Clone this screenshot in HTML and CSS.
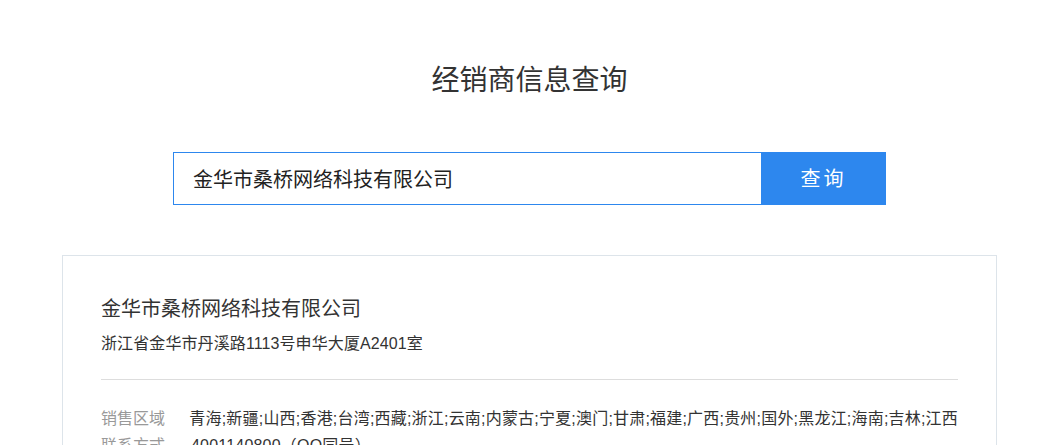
FILE: index.html
```html
<!DOCTYPE html>
<html lang="zh-CN">
<head>
    <meta charset="UTF-8">
    <meta name="viewport" content="width=device-width, initial-scale=1.0">
    <title>经销商信息查询</title>
    <link rel="stylesheet" href="styles.css">
</head>
<body>
    <div class="wrap">
        <!--标题-->
        <h1 class="title">经销商信息查询</h1>
        <!--搜索框-->
        <div class="search">
            <input class="search-input" type="text" value="金华市桑桥网络科技有限公司">
            <button class="search-btn">查询</button>
        </div>
        <!--查询结果-->
        <div class="result">
            <div class="result-head">
                <h2 class="company">金华市桑桥网络科技有限公司</h2>
                <p class="address">浙江省金华市丹溪路1113号申华大厦A2401室</p>
            </div>
            <ul class="info">
                <li><span class="label">销售区域</span><span class="value">青海;新疆;山西;香港;台湾;西藏;浙江;云南;内蒙古;宁夏;澳门;甘肃;福建;广西;贵州;国外;黑龙江;海南;吉林;江西</span></li>
                <li><span class="label">联系方式</span><span class="value">4001140800（QQ同号）</span></li>
            </ul>
        </div>
    </div>
</body>
</html>
```

FILE: styles.css
```css
*{
    margin:0;
    padding:0;
    box-sizing:border-box;
}
body{
    font-family:"Liberation Sans","Noto Sans CJK SC",sans-serif;
    color:#333;
    background:#fff;
}
.wrap{
    width:935px;
    margin-left:62px;
}
/*标题*/
.title{
    font-size:28px;
    font-weight:normal;
    text-align:center;
    line-height:40px;
    padding-top:61px;
    color:#333;
}
/*搜索框*/
.search{
    display:flex;
    width:713px;
    height:53px;
    margin:51px auto 0;
}
.search-input{
    flex:1;
    border:1px solid #2d87ee;
    border-right:none;
    padding:0 19px;
    font-size:20px;
    font-family:inherit;
    color:#222;
    outline:none;
}
.search-btn{
    width:125px;
    border:none;
    background-color:#2d87ee;
    color:#fff;
    font-size:20px;
    font-family:inherit;
    letter-spacing:3px;
    padding-bottom:2px;
}
/*结果*/
.result{
    margin-top:50px;
    border:1px solid #dde4ea;
    border-bottom:none;
    padding:0 38px;
    height:200px;
}
.result-head{
    padding:38px 0 23px;
    border-bottom:1px solid #ddd;
}
.company{
    font-size:20px;
    font-weight:normal;
    line-height:30px;
    color:#333;
}
.address{
    font-size:16px;
    line-height:24px;
    margin-top:8px;
    color:#333;
    letter-spacing:0.1px;
}
.info{
    list-style:none;
    padding-top:25px;
}
.info li{
    display:flex;
    font-size:16px;
    line-height:27px;
}
.label{
    width:90px;
    color:#999;
}
.value{
    flex:1;
    color:#333;
    white-space:nowrap;
    letter-spacing:0.2px;
}
```
